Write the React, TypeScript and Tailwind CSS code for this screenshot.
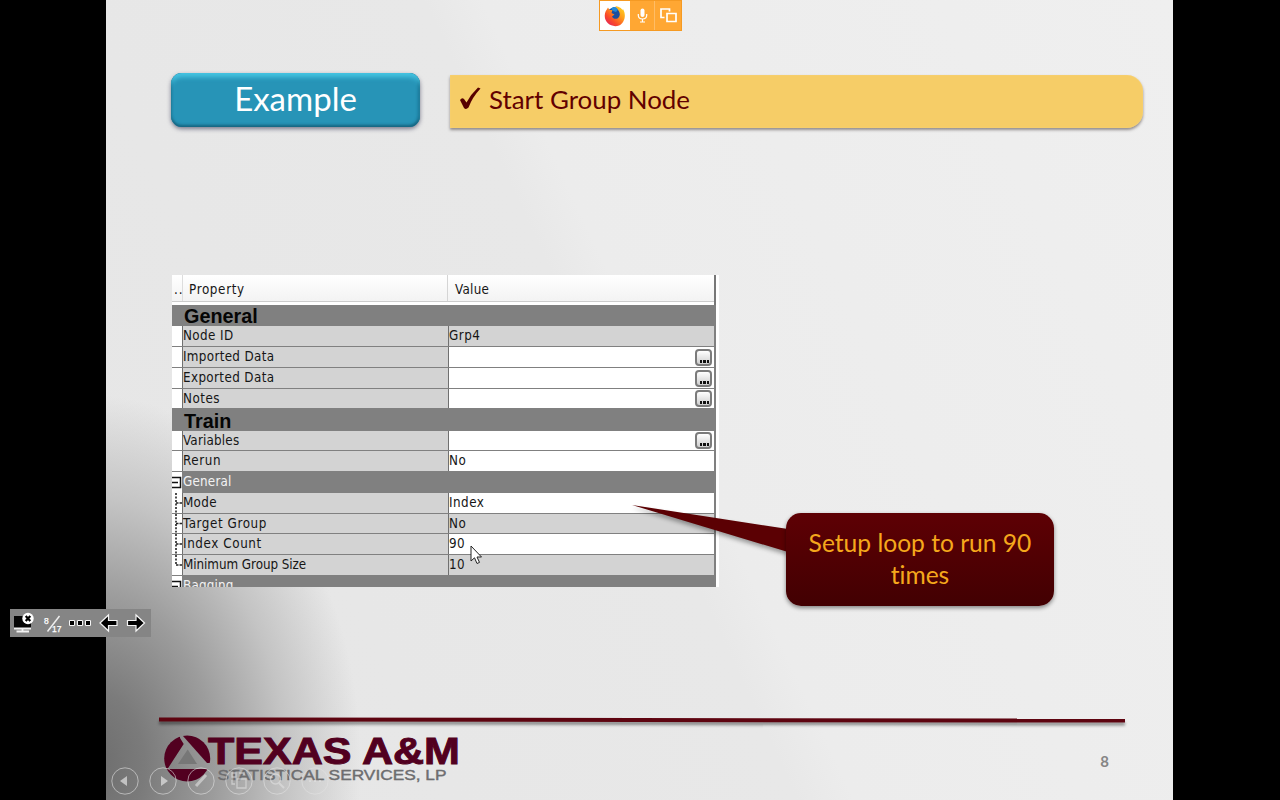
import type { ReactNode } from "react";

type Row = {
  kind: "title" | "group" | "item";
  label: string;
  value?: string;
  readOnly?: boolean;
  more?: boolean;
  tree?: "mid" | "end";
  height: string;
  tracking?: string;
};

const rows: Row[] = [
  { kind: "title", label: "General", height: "h-[21px]" },
  { kind: "item", label: "Node ID", value: "Grp4", readOnly: true, height: "h-[21px]", tracking: "tracking-[0.4px]" },
  { kind: "item", label: "Imported Data", more: true, height: "h-[21px]", tracking: "tracking-[0.33px]" },
  { kind: "item", label: "Exported Data", more: true, height: "h-[21px]", tracking: "tracking-[0.38px]" },
  { kind: "item", label: "Notes", more: true, height: "h-[20px]", tracking: "tracking-[0.5px]" },
  { kind: "title", label: "Train", height: "h-[22px]" },
  { kind: "item", label: "Variables", more: true, height: "h-[20px]", tracking: "tracking-[0.2px]" },
  { kind: "item", label: "Rerun", value: "No", height: "h-[21px]", tracking: "tracking-[0.6px]" },
  { kind: "group", label: "General", height: "h-[21px]" },
  { kind: "item", label: "Mode", value: "Index", tree: "mid", height: "h-[21px]", tracking: "tracking-[0.3px]" },
  { kind: "item", label: "Target Group", value: "No", readOnly: true, tree: "mid", height: "h-[20px]", tracking: "tracking-[0.58px]" },
  { kind: "item", label: "Index Count", value: "90", tree: "mid", height: "h-[21px]", tracking: "tracking-[0.6px]" },
  { kind: "item", label: "Minimum Group Size", value: "10", readOnly: true, tree: "end", height: "h-[21px]", tracking: "tracking-[-0.05px]" },
  { kind: "group", label: "Bagging", height: "h-[11px]" },
];

function MoreButton() {
  return (
    <span className="mr-[2px] flex h-[17px] w-[17px] items-end justify-center gap-[1px] rounded-[4px] border-2 border-[#7b7b7b] bg-linear-to-b from-white to-[#cfcfcf] pb-[1px] pl-[2px]">
      <i className="h-[3px] w-[2.5px] bg-[#111]" />
      <i className="h-[3px] w-[2.5px] bg-[#111]" />
      <i className="h-[3px] w-[2.5px] bg-[#111]" />
    </span>
  );
}

function TreeLine({ end }: { end: boolean }) {
  return (
    <svg className="h-full w-[10px]" viewBox="0 0 10 20" preserveAspectRatio="none">
      <path d={end ? "M4 0V10" : "M4 0V20"} stroke="#222" strokeWidth="1.6" strokeDasharray="2 1.5" />
      <path d="M4 10H10" stroke="#222" strokeWidth="1.4" strokeDasharray="2.5 1" />
    </svg>
  );
}

function GridRow({ row }: { row: Row }) {
  if (row.kind === "title") {
    return (
      <div className={`${row.height} flex shrink-0 items-center bg-[#808080] pt-[3px] pl-[12px] font-['Liberation_Sans',sans-serif] text-[19.8px] leading-none font-bold text-[#050505]`}>
        {row.label}
      </div>
    );
  }
  if (row.kind === "group") {
    return (
      <div className={`${row.height} flex shrink-0 overflow-hidden bg-[#808080]`}>
        <div className="w-[10px] bg-white">
          <svg width="10" height="20" viewBox="0 0 10 20" fill="none" stroke="#111" strokeWidth="1.5">
            <path d="M0 5.5H8.5V15.5H0M0 10.5H6" />
          </svg>
        </div>
        <span className="pl-[1px] leading-[20px] tracking-[0.2px] text-[#f2f2f2]">{row.label}</span>
      </div>
    );
  }
  return (
    <div className={`${row.height} flex shrink-0 border-b border-[#808080] leading-[20px]`}>
      <div className="w-[10px] bg-white">{row.tree && <TreeLine end={row.tree === "end"} />}</div>
      <div className={`w-[266px] border-l border-[#707070] bg-[#d3d3d3] ${row.tracking ?? ""}`}>{row.label}</div>
      <div className={`flex w-[266px] items-center justify-between border-l border-[#707070] ${row.readOnly ? "bg-[#d3d3d3]" : "bg-white"}`}>
        <span className="self-start tracking-[0.5px]">{row.value}</span>
        {row.more && <MoreButton />}
      </div>
      <div className="flex-1 bg-[#808080]" />
    </div>
  );
}

function PropertyGrid() {
  return (
    <div className="ml-[66px] h-[312px] w-[547px] bg-white pr-[3px]">
      <div className="flex h-full flex-col overflow-hidden font-['DejaVu_Sans_Condensed','DejaVu_Sans',sans-serif] text-[13.3px] [font-stretch:condensed] text-[#161616]">
        <div className="flex h-[30px] shrink-0 border-r-2 border-[#777]">
          <div className="flex h-[27px] flex-1 items-center border-b border-[#ccc] bg-linear-to-b from-white to-[#f3f3f3]">
            <span className="h-[26px] w-[11px] border-r border-[#ddd] pl-[2px] leading-[29px] tracking-[1px]">..</span>
            <span className="h-[26px] w-[265px] border-r border-[#d5d5d5] pl-[6px] leading-[29px] tracking-[0.65px]">Property</span>
            <span className="h-[26px] pl-[7px] leading-[29px] tracking-[0.3px]">Value</span>
          </div>
        </div>
        {rows.map((row, i) => (
          <GridRow key={i} row={row} />
        ))}
      </div>
    </div>
  );
}

function Callout() {
  return (
    <>
      <svg className="absolute top-[495px] left-[620px] drop-shadow-[0_3px_2px_rgba(0,0,0,0.35)]" width="180" height="70" viewBox="620 495 180 70">
        <path d="M632 505L788 529V552Z" fill="#5b0003" />
      </svg>
      <div className="absolute top-[513px] left-[786px] flex h-[93px] w-[268px] items-center justify-center rounded-[15px] bg-linear-to-b from-[#5e0004] to-[#420002] text-center font-['Lato','Open_Sans',sans-serif] text-[24.6px] leading-[32px] text-[#f5a81c] shadow-[0_2px_4px_rgba(0,0,0,0.45)] [font-variant-ligatures:none]">
        <p className="-mt-px">
          Setup loop to run 90
          <br />
          times
        </p>
      </div>
    </>
  );
}

function SharingBar() {
  return (
    <div className="absolute top-0 left-[599px] flex h-[31px] w-[83px] border border-[#f59a23] bg-[#ffa733]">
      <div className="flex w-[30px] items-center justify-center bg-white">
        <svg width="22" height="22" viewBox="0 0 22 22">
          <defs>
            <linearGradient id="flame" x1="1" y1="0" x2="0.1" y2="1">
              <stop offset="0" stopColor="#ffe226" />
              <stop offset="0.4" stopColor="#ff9a1b" />
              <stop offset="0.7" stopColor="#fa4b29" />
              <stop offset="1" stopColor="#e01c62" />
            </linearGradient>
          </defs>
          <circle cx="11" cy="11" r="8.800" fill="#1d4f9f" />
          <path d="M2.500 5L4 2.500L5.500 5L8.500 5L7.500 8L10.500 9.500L8 11.500C9 14 13 15 15 12C17 9 15 5.500 12.500 3.500L11.500 1C16 2 17 3 18.500 5L19 4C23 11 20 18 15 20.500C8 23 0 18 0.800 10C1 8 1.500 6 2.500 5Z" fill="url(#flame)" />
          <path d="M7 3.500C9 1 12 1.500 14 4.500L12 7L9 6Z" fill="#2389d7" />
        </svg>
      </div>
      <div className="flex w-[25px] items-center justify-center border-r border-[#ffbd66]">
        <svg width="11" height="15" viewBox="0 0 11 15">
          <rect x="3.500" y="0.500" width="4" height="8.500" rx="2" fill="#fff" />
          <path d="M1.300 6V7.500Q1.500 11 5.500 11Q9.500 11 9.700 7.500V6M5.500 11V14M3 14H8" fill="none" stroke="#fff" strokeWidth="1.200" />
        </svg>
      </div>
      <div className="flex flex-1 items-center justify-center">
        <svg width="17" height="15" viewBox="0 0 17 15" fill="none" stroke="#fff" strokeWidth="1.700">
          <path d="M4.500 9.500H1V1H9.500V3.500M7 5.500H16V13.500H7Z" />
        </svg>
      </div>
    </div>
  );
}

function PresenterBar() {
  return (
    <div className="absolute top-[609px] left-[10px] h-[28px] w-[141px] bg-[#858585]">
      <svg width="141" height="28" viewBox="10 609 141 28">
        <rect x="14" y="616" width="17" height="12" fill="#050505" />
        <path d="M14 628.500H31M22.500 629V632M16.500 631.500H29" stroke="#f2f2f2" strokeWidth="1.800" />
        <circle cx="28" cy="618.500" r="5.700" fill="#fff" />
        <path d="M25.700 616L30.300 621M30.300 616L25.700 621" stroke="#000" strokeWidth="2.200" />
        <path d="M47.500 631.500L59.500 616" stroke="#eee" strokeWidth="1.500" />
        <g fill="#fff" stroke="#fff" strokeWidth="0.250" fontFamily="Liberation Sans, sans-serif" fontSize="8.500">
          <text x="44" y="623.500">8</text>
          <text x="52" y="631.500">17</text>
        </g>
        <g fill="#000" stroke="#f5f5f5" strokeWidth="1">
          <path d="M69.500 620.500H74.500V625.500H69.500ZM77.500 620.500H82.500V625.500H77.500ZM85.500 620.500H90.500V625.500H85.500Z" />
          <path d="M100 623L108.500 615V620.500H117V625.500H108.500V631Z" strokeWidth="1.200" />
          <path d="M144.500 623L136 615V620.500H127.500V625.500H136V631Z" strokeWidth="1.200" />
        </g>
      </svg>
    </div>
  );
}

function Logo() {
  return (
    <svg width="310" height="56" viewBox="158 732 310 56">
      <defs>
        <clipPath id="disc">
          <circle cx="187.200" cy="759.500" r="23" />
        </clipPath>
      </defs>
      <g clipPath="url(#disc)" fill="#520020">
        <path d="M150 730H180V739L183.700 745L167.500 770L150 780Z" />
        <path d="M183 730V737L207 764H215V730Z" />
        <path d="M160 770H215V790H160Z" />
      </g>
      <path d="M187.700 750.500L197 765H178Z" fill="#777" />
      <text x="208" y="764.500" fill="#520020" stroke="#520020" strokeWidth="0.900" fontFamily="Liberation Sans, sans-serif" fontWeight="700" fontSize="37" textLength="252" lengthAdjust="spacingAndGlyphs">
        TEXAS A&amp;M
      </text>
      <text x="217.500" y="780.500" fill="#6d6d6f" stroke="#6d6d6f" strokeWidth="0.400" fontFamily="Liberation Sans, sans-serif" fontSize="14.500" textLength="229" lengthAdjust="spacingAndGlyphs">
        STATISTICAL SERVICES, LP
      </text>
    </svg>
  );
}

function NavButton({ children }: { children: ReactNode }) {
  return (
    <svg width="28" height="28" viewBox="0 0 28 28" fill="none" stroke="#e2e2e2" strokeWidth="2">
      <circle cx="14" cy="14" r="13.200" strokeWidth="1" />
      {children}
    </svg>
  );
}

function SlideNav() {
  return (
    <div className="absolute top-[767px] left-[111px] flex gap-[10px] opacity-60">
      <NavButton>
        <path d="M16 9V19L9 14Z" fill="#f4f4f4" stroke="none" />
      </NavButton>
      <NavButton>
        <path d="M12 9V19L19 14Z" fill="#f4f4f4" stroke="none" />
      </NavButton>
      <NavButton>
        <path d="M9 19L19 8" strokeWidth="3" />
      </NavButton>
      <NavButton>
        <path d="M7 6H11V10H7ZM14 6H19V8M7 13V17H10M12 12H21V21H12Z" strokeWidth="1.300" />
      </NavButton>
      <NavButton>
        <circle cx="12.500" cy="12" r="5" strokeWidth="1.500" />
        <path d="M16 16L21 21" />
      </NavButton>
      <NavButton>
        <path d="M8 14H10M13 14H15M18 14H20" />
      </NavButton>
    </div>
  );
}

export default function App() {
  return (
    <div className="relative flex h-[800px] w-[1280px] justify-center overflow-hidden bg-black">
      <main className="mr-px flex h-[800px] w-[1067px] flex-col bg-[radial-gradient(ellipse_270px_370px_at_-15px_765px,#6c6c6c_0%,#7b7b7b_20%,#9c9c9c_46%,#c4c4c4_72%,rgba(229,229,229,0)_100%),linear-gradient(65deg,#e6e6e6_0%,#e8e8e8_48%,#ececec_52%,#efefef_100%)]">
        <header className="flex gap-[29px] pt-[73px] pl-[65px] font-['Lato','Open_Sans',sans-serif]">
          <h1 className="h-[54px] w-[249px] rounded-[11px] bg-[#2794b7] text-center text-[33px] leading-[50px] text-white shadow-[inset_0_6px_5px_-2px_#46c6e4,inset_0_-2px_3px_#176580,inset_-2px_0_3px_#1b7594,inset_1px_0_2px_#1b7594,0_2px_4px_rgba(50,50,80,0.6)]">
            Example
          </h1>
          <div className="mt-[2px] ml-px flex h-[53px] w-[693px] rounded-r-[16px] bg-[#f6cd67] pl-[9px] text-[25.9px] leading-[49px] text-[#620000] shadow-[0_2px_3px_rgba(70,60,60,0.55),inset_0_0_1px_#ffe0a0]">
            <svg className="mt-[11px] mr-[8px]" width="22" height="25" viewBox="0 0 22 25">
              <path d="M1 14Q3 11 5 13L7.500 16.500Q12 8 19 1.500L21.500 2.500Q13.500 11 9.500 21.500Q7 24 5 22Z" fill="#570000" />
            </svg>
            Start Group Node
          </div>
        </header>
        <section className="mt-[147px]">
          <PropertyGrid />
        </section>
        <div className="mt-[131px] ml-[53px] h-[4px] w-[966px] shrink-0 rotate-[0.06deg] bg-[#5e0410] shadow-[0_3px_3px_rgba(0,0,0,0.4)]" />
        <footer className="mt-[9px] ml-[52px] flex w-[951px] items-start justify-between">
          <Logo />
          <span className="pt-[20px] font-['Lato','Open_Sans',sans-serif] text-[15px] leading-5 font-bold text-[#858585]">8</span>
        </footer>
      </main>
      <Callout />
      <SharingBar />
      <PresenterBar />
      <SlideNav />
      <svg className="absolute top-[545px] left-[470px]" width="13" height="20" viewBox="0 0 13 20">
        <path d="M1 1V16L4.500 12.800L7 18.500L9.500 17.400L7 12H11.500Z" fill="#fff" stroke="#222" />
      </svg>
    </div>
  );
}
